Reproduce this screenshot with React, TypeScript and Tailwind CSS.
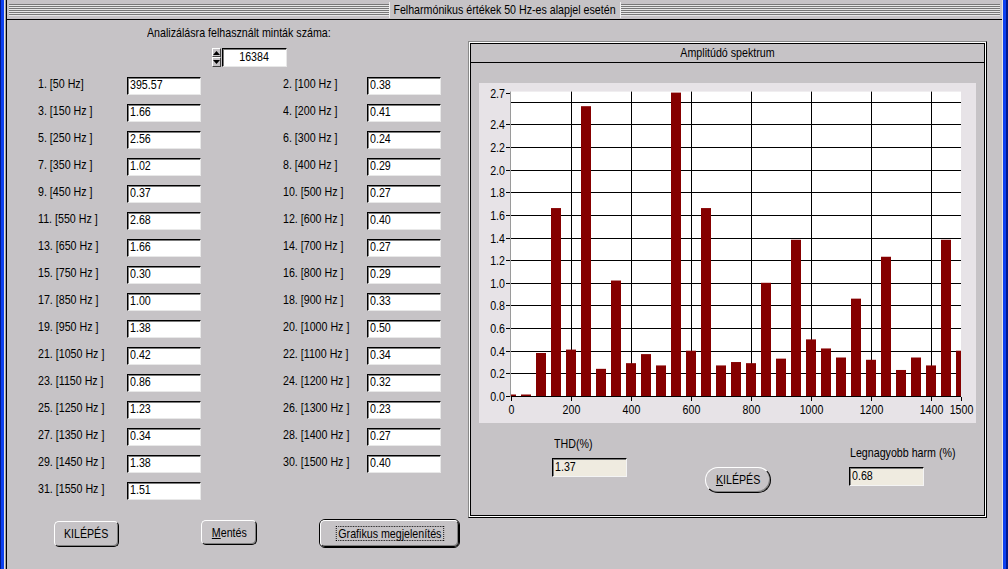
import React from "react";

const values = [
  395.57, 0.38, 1.66, 0.41, 2.56, 0.24, 1.02, 0.29, 0.37, 0.27, 2.68, 0.4, 1.66,
  0.27, 0.3, 0.29, 1.0, 0.33, 1.38, 0.5, 0.42, 0.34, 0.86, 0.32, 1.23, 0.23,
  0.34, 0.27, 1.38, 0.4, 1.51,
];

function labelFor(n: number) {
  return n === 1 ? "1. [50 Hz]" : `${n}. [${n * 50} Hz ]`;
}

function L({ children }: { children: React.ReactNode }) {
  return (
    <span className="inline-block whitespace-nowrap origin-left scale-x-[0.82]">
      {children}
    </span>
  );
}

function C({ children }: { children: React.ReactNode }) {
  return (
    <span className="inline-block whitespace-nowrap origin-center scale-x-[0.82]">
      {children}
    </span>
  );
}

function ValueBox({ v }: { v: string }) {
  return (
    <div className="w-[74px] h-[18px] bg-white border border-t-black border-l-black border-r-[#e8e8e8] border-b-[#e8e8e8] shadow-[inset_1px_1px_0_#7b7b7b] text-[13px] leading-[14px] pl-[2px] text-black overflow-hidden">
      <L>{v}</L>
    </div>
  );
}

function ReadBox({ v }: { v: string }) {
  return (
    <div className="w-[75px] h-[19px] bg-[#efebe0] border border-t-black border-l-black border-r-[#f4f4f4] border-b-[#f4f4f4] shadow-[inset_1px_1px_0_#7b7b7b] text-[13px] leading-[15px] pl-[2px] text-black">
      <L>{v}</L>
    </div>
  );
}

function Chart() {
  const W = 497;
  const H = 340;
  const px0 = 32;
  const pxW = 450;
  const top = 9.6;
  const bottom = 313;
  const maxV = 2.68;
  const x = (f: number) => px0 + (f * pxW) / 1500;
  const y = (v: number) => bottom - ((bottom - top) * v) / maxV;
  const bars: { f: number; v: number }[] = [
    { f: 0, v: 0 },
    { f: 50, v: 0 },
  ];
  for (let n = 2; n <= 31; n++) bars.push({ f: n * 50, v: values[n - 1] });
  const hLines: number[] = [];
  for (let i = 1; i <= 13; i++) hLines.push(+(i * 0.2).toFixed(1));
  const yLabels = [
    { v: 2.68, t: "2.7" },
    { v: 2.4, t: "2.4" },
    { v: 2.2, t: "2.2" },
    { v: 2.0, t: "2.0" },
    { v: 1.8, t: "1.8" },
    { v: 1.6, t: "1.6" },
    { v: 1.4, t: "1.4" },
    { v: 1.2, t: "1.2" },
    { v: 1.0, t: "1.0" },
    { v: 0.8, t: "0.8" },
    { v: 0.6, t: "0.6" },
    { v: 0.4, t: "0.4" },
    { v: 0.2, t: "0.2" },
    { v: 0.0, t: "0.0" },
  ];
  const xTicks = [0, 200, 400, 600, 800, 1000, 1200, 1400, 1500];
  return (
    <svg
      width={W}
      height={H}
      viewBox={`0 0 ${W} ${H}`}
      fontFamily="'Liberation Sans',Arial,sans-serif"
      fontSize="13"
    >
      <defs>
        <clipPath id="plotclip">
          <rect x={px0} y={top - 1} width={pxW} height={bottom - top + 1} />
        </clipPath>
      </defs>
      <rect x={px0} y={top - 1} width={pxW} height={bottom - top + 1} fill="#ffffff" />
      {hLines.map((v) => (
        <line
          key={v}
          x1={px0}
          x2={px0 + pxW}
          y1={Math.round(y(v)) + 0.5}
          y2={Math.round(y(v)) + 0.5}
          stroke="#000"
          strokeWidth="1"
        />
      ))}
      {[200, 400, 600, 800, 1000, 1200, 1400].map((f) => (
        <line
          key={f}
          x1={Math.round(x(f)) + 0.5}
          x2={Math.round(x(f)) + 0.5}
          y1={top - 1}
          y2={bottom}
          stroke="#000"
          strokeWidth="1"
        />
      ))}
      <g clipPath="url(#plotclip)">
        {bars.map((b) => {
          const yy = y(b.v);
          const h = Math.max(bottom - yy, 1.5);
          return (
            <rect
              key={b.f}
              x={Math.round(x(b.f)) - 5}
              y={bottom - h}
              width={10}
              height={h}
              fill="#850000"
            />
          );
        })}
      </g>
      <line x1={px0} x2={px0 + pxW} y1={bottom + 0.5} y2={bottom + 0.5} stroke="#000" />
      <line x1={px0 - 0.5} x2={px0 - 0.5} y1={top - 1} y2={bottom + 1} stroke="#9a9a9a" />
      {yLabels.map((l) => {
        const yy = Math.round(y(l.v)) + 0.5;
        return (
          <g key={l.t}>
            <line x1={px0 - 5} x2={px0 - 1} y1={yy} y2={yy} stroke="#000" />
            <text
              transform={`translate(${px0 - 6} ${yy + 4.5}) scale(0.82 1)`}
              textAnchor="end"
              fill="#000"
            >
              {l.t}
            </text>
          </g>
        );
      })}
      {xTicks.map((f) => {
        const xx = Math.round(x(f)) + 0.5;
        return (
          <g key={f}>
            <line x1={xx} x2={xx} y1={bottom + 1} y2={bottom + 5} stroke="#000" />
            <text
              transform={`translate(${xx} ${bottom + 18}) scale(0.82 1)`}
              textAnchor="middle"
              fill="#000"
            >
              {f}
            </text>
          </g>
        );
      })}
    </svg>
  );
}

const btn =
  "flex items-center justify-center bg-[#c6c3c6] border border-t-white border-l-white border-r-black border-b-black shadow-[inset_-1px_-1px_0_#808080] text-[13px] text-black overflow-visible";

export default function App() {
  const rows: number[] = [];
  for (let k = 0; k < 16; k++) rows.push(k);
  return (
    <div className="w-[1008px] h-[569px] flex bg-[#c6c3c6] overflow-hidden font-['Liberation_Sans',Arial,sans-serif] text-black">
      {/* left window border */}
      <div className="w-[1px] bg-[#00188c]" />
      <div className="w-[3px] bg-[#0c40f0]" />
      <div className="w-[1px] bg-[#e4e4e4]" />
      <div className="w-[1px] bg-[#a0a0a0]" />
      <div className="w-[1px] bg-black" />

      <div className="w-[995px] flex flex-col">
        {/* title bar */}
        <div className="h-[20px] border-b border-black px-[2px] flex items-center">
          <div className="h-[12px] flex-1 mt-[1px] bg-[repeating-linear-gradient(to_bottom,#777777_0px,#777777_1px,#e6e6e6_1px,#e6e6e6_2px)] flex items-center justify-center">
            <div className="w-[232px] h-[16px] bg-[#c6c3c6] border-l border-r border-[#f0f0f0] text-[13px] leading-[15px] flex justify-center">
              <C>Felharmónikus értékek 50 Hz-es alapjel esetén</C>
            </div>
          </div>
        </div>

        <div className="flex">
          {/* left column */}
          <div className="w-[461px] flex flex-col">
            <div className="mt-[5px] pl-[140px] text-[13px] leading-[16px]">
              <L>Analizálásra felhasznált minták száma:</L>
            </div>
            <div className="mt-[7px] ml-[205px] flex items-start">
              <div className="flex flex-col w-[9px]">
                <div className="h-[9px] w-[9px] bg-[#c6c3c6] border border-t-white border-l-white border-r-[#404040] border-b-[#404040] flex items-center justify-center">
                  <svg width="7" height="4" viewBox="0 0 7 4">
                    <polygon points="3.5,0 7,4 0,4" fill="#000" />
                  </svg>
                </div>
                <div className="h-[10px] w-[9px] bg-[#c6c3c6] border border-t-white border-l-white border-r-[#404040] border-b-[#404040] flex items-center justify-center">
                  <svg width="7" height="4" viewBox="0 0 7 4">
                    <polygon points="0,0 7,0 3.5,4" fill="#000" />
                  </svg>
                </div>
              </div>
              <div className="ml-[1px] w-[65px] h-[19px] bg-white border border-t-black border-l-black border-r-[#e8e8e8] border-b-[#e8e8e8] shadow-[inset_1px_1px_0_#7b7b7b] text-[13px] leading-[16px] flex justify-center">
                <C>16384</C>
              </div>
            </div>

            <div className="mt-[10px] ml-[31px] grid grid-cols-[89px_74px_82px_84px_74px] auto-rows-[18px] gap-y-[9px] items-start text-[13px] leading-[14px]">
              {rows.map((k) => {
                const a = 2 * k + 1;
                const b = 2 * k + 2;
                return (
                  <React.Fragment key={k}>
                    <div>
                      <L>{labelFor(a)}</L>
                    </div>
                    <ValueBox v={values[a - 1].toFixed(2)} />
                    <div />
                    {b <= 30 ? (
                      <div>
                        <L>{labelFor(b)}</L>
                      </div>
                    ) : (
                      <div />
                    )}
                    {b <= 30 ? <ValueBox v={values[b - 1].toFixed(2)} /> : <div />}
                  </React.Fragment>
                );
              })}
            </div>

            <div className="mt-[19px] flex items-start">
              <div className={`${btn} ml-[47px] mt-[2px] w-[65px] h-[26px] rounded-[5px]`}>
                <C>KILÉPÉS</C>
              </div>
              <div className={`${btn} ml-[82px] mt-[1px] w-[56px] h-[25px] rounded-[5px]`}>
                <C>
                  <span className="underline">M</span>entés
                </C>
              </div>
              <div className="ml-[62px] w-[141px] h-[29px] rounded-[6px] border border-black flex">
                <div className={`${btn} flex-1 rounded-[5px]`}>
                  <span className="inline-block origin-center scale-x-[0.82] whitespace-nowrap border border-dotted border-black px-[2px] leading-[13px]">
                    Grafikus megjelenítés
                  </span>
                </div>
              </div>
            </div>
          </div>

          {/* right panel */}
          <div className="mt-[21px] w-[519px] h-[477px] border border-t-[#8a8a8a] border-l-[#8a8a8a] border-r-black border-b-black">
            <div className="h-full border border-white">
              <div className="h-full border border-black flex flex-col">
                <div className="h-[19px] border-b border-black text-[13px] leading-[18px] flex justify-center">
                  <C>Amplitúdó spektrum</C>
                </div>
                <div className="mt-[20px] ml-[8px] w-[497px] h-[340px] bg-[#e7e3e7]">
                  <Chart />
                </div>
                <div className="flex items-start">
                  <div className="ml-[81px] flex flex-col">
                    <div className="mt-[13px] pl-[2px] text-[13px] leading-[16px]">
                      <L>THD(%)</L>
                    </div>
                    <div className="mt-[6px]">
                      <ReadBox v="1.37" />
                    </div>
                  </div>
                  <div
                    className={`${btn} ml-[78px] mt-[44px] w-[66px] h-[26px] rounded-[13px]`}
                  >
                    <C>
                      <span className="underline">K</span>ILÉPÉS
                    </C>
                  </div>
                  <div className="ml-[78px] flex flex-col">
                    <div className="mt-[22px] pl-[1px] text-[13px] leading-[16px]">
                      <L>Legnagyobb harm (%)</L>
                    </div>
                    <div className="mt-[6px]">
                      <ReadBox v="0.68" />
                    </div>
                  </div>
                </div>
              </div>
            </div>
          </div>
        </div>
      </div>

      {/* right window border */}
      <div className="w-[1px] bg-[#e4e4e4]" />
      <div className="w-[3px] bg-[#0c40f0]" />
      <div className="w-[2px] bg-[#00188c]" />
    </div>
  );
}
